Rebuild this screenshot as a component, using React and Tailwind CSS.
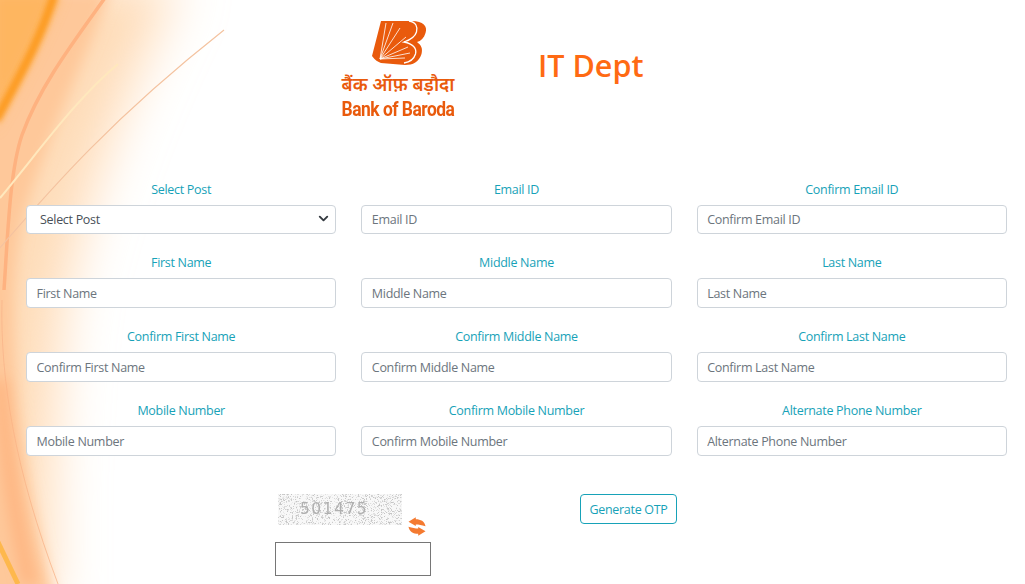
import React from "react";
import { ChevronDown } from "lucide-react";

const fields = [
  ["First Name", "Middle Name", "Last Name"],
  ["Confirm First Name", "Confirm Middle Name", "Confirm Last Name"],
  ["Mobile Number", "Confirm Mobile Number", "Alternate Phone Number"],
];

function Background() {
  return (
    <svg className="absolute inset-0 w-full h-full" viewBox="0 0 1025 584" preserveAspectRatio="none" aria-hidden="true">
      <defs>
        <filter id="b30" x="-50%" y="-20%" width="200%" height="140%"><feGaussianBlur stdDeviation="26" /></filter>
        <filter id="b8" x="-50%" y="-20%" width="200%" height="140%"><feGaussianBlur stdDeviation="7" /></filter>
        <filter id="b3" x="-50%" y="-20%" width="200%" height="140%"><feGaussianBlur stdDeviation="2.5" /></filter>
        <filter id="b1"><feGaussianBlur stdDeviation="0.5" /></filter>
      </defs>
      <path d="M-40 -20 L180 -20 C135 70 92 170 64 300 C52 400 50 500 52 604 L-40 604 Z" fill="#fedcb8" filter="url(#b30)" />
      <path d="M-20 -10 L110 -10 C85 60 50 130 25 210 C10 270 12 340 20 420 C28 490 40 540 55 600 L-20 600 Z" fill="#fec89a" filter="url(#b8)" />
      <path d="M-10 -10 L60 -10 C40 40 20 80 -10 130 Z" fill="#feb660" filter="url(#b8)" />
      <path d="M54 -5 C40 40 20 75 -4 120" stroke="#fd9c24" strokeWidth="9" fill="none" filter="url(#b3)" />
      <path d="M107 -5 C75 40 40 85 22 135 C10 170 8 230 4 290" stroke="#feb280" strokeWidth="3.5" fill="none" filter="url(#b1)" />
      <path d="M0 198 C40 150 75 100 118 64" stroke="#ffe8bd" strokeWidth="2" fill="none" filter="url(#b1)" />
      <path d="M-2 250 C50 190 110 120 224 30" stroke="#f4c3a0" strokeWidth="1.2" fill="none" filter="url(#b1)" />
      <path d="M2 300 C0 380 15 470 58 584" stroke="#f9b58a" strokeWidth="0.8" fill="none" />
      <path d="M0 380 C5 450 15 520 30 584" stroke="#feb27e" strokeWidth="12" fill="none" filter="url(#b8)" />
      <path d="M-3 540 L18 584" stroke="#feb84e" strokeWidth="5" fill="none" filter="url(#b1)" />
    </svg>
  );
}

function Logo() {
  const hub = [380, 59];
  const rays = [[386, 23], [393, 23], [400, 28], [406, 37], [408, 47], [410, 53], [405, 58]];
  return (
    <div className="flex flex-col items-center w-[114px] text-[#e95a0c]">
      <svg width="60" height="48" viewBox="368 19 60 48" aria-hidden="true">
        <path d="M381 21 L412 21 C423 21 428 26 425.5 33 C424 38 421 41 417 42 C421 45 423 48 421.5 54 C419 62 413 65 405 65 L381 63 C378 62 375 60 372 56 Z" fill="#e95a0c" />
        {rays.map((r, i) => (
          <line key={i} x1={hub[0]} y1={hub[1]} x2={r[0]} y2={r[1]} stroke="#fff" strokeWidth="0.8" />
        ))}
        <path d="M409 21 C416 22 418 27 416.5 32 C415 37 410 40 404 42 C413 44 417 48 415.5 54 C414 59 410 62 404 63" fill="none" stroke="#fff" strokeWidth="1.3" />
      </svg>
      <div className="mt-[9px] h-[22px] leading-[22px] text-[18.5px] font-semibold whitespace-nowrap tracking-normal" style={{ fontFamily: '"Noto Sans Devanagari","Noto Sans","DejaVu Sans",sans-serif' }}>
        बैंक ऑफ़ बड़ौदा
      </div>
      <div className="mt-[1px] h-[20px] leading-[20px] text-[21px] font-bold whitespace-nowrap tracking-[-0.6px] scale-x-[0.83] font-['Roboto',sans-serif]">
        Bank of Baroda
      </div>
    </div>
  );
}

function Field({ label, children }) {
  return (
    <div className="flex flex-col">
      <label className="text-center text-[#17a2b8] h-[18px] leading-[18px] mt-[1px] mb-[6px]">{label}</label>
      {children}
    </div>
  );
}

const inputBase = "w-full bg-white border border-[#ced4da] rounded-[4px] px-[9.5px] outline-none text-[#495057] placeholder:text-[#6c757d] placeholder:opacity-100";

function RefreshIcon() {
  const d = "M0.5 4.5 L8 0 L8 2 C13 2 17 4 18 9.3 C14 8 11 7.5 8 7.5 L8 9 Z";
  return (
    <svg width="18" height="19" viewBox="0 0 18.5 19" className="mt-[23px] ml-[6px] shrink-0" aria-hidden="true">
      <path d={d} fill="#f47a30" />
      <path d={d} fill="#f47a30" transform="rotate(180 9.25 9.5)" />
    </svg>
  );
}

function Captcha() {
  const specks = [];
  let s = 7;
  const next = () => {
    s = (s * 1103515 + 12345) % 2147483648;
    return Math.floor(s / 1024);
  };
  for (let i = 0; i < 1700; i++) {
    const x = next() % 124;
    const y = next() % 31;
    const v = 195 + (next() % 50);
    specks.push(<rect key={i} x={x} y={y} width="1" height="1" fill={`rgb(${v},${v},${v})`} />);
  }
  return (
    <svg width="124" height="31" viewBox="0 0 124 31" aria-hidden="true">
      <defs>
        <filter id="soft"><feGaussianBlur stdDeviation="0.45" /></filter>
      </defs>
      <rect width="124" height="31" fill="#f8f8f8" />
      {specks}
      <text x="22" y="20" fill="#b0b0b0" fontSize="15.5" letterSpacing="1.5" fontFamily="'DejaVu Sans',sans-serif" filter="url(#soft)">501475</text>
    </svg>
  );
}

export default function App() {
  return (
    <div className="relative w-[1025px] h-[584px] overflow-hidden bg-white text-[12.5px] tracking-[-0.3px] font-['Open_Sans',sans-serif]">
      <Background />
      <div className="relative flex flex-col h-full">
        <header className="flex h-[180px] pl-[341px]">
          <div className="pt-[19px]"><Logo /></div>
          <h1 className="ml-[83px] mt-[45px] text-[30.5px] tracking-normal leading-[40px] font-semibold text-[#ff6a13]">IT Dept</h1>
        </header>
        <div className="grid grid-cols-3 gap-x-[25px] gap-y-[19px] pl-[26px] pr-[18px]">
          <Field label="Select Post">
            <div className="relative">
              <select className="w-full h-[29px] appearance-none bg-white border border-[#ced4da] rounded-[4px] pl-[13px] pt-[1px] text-[#495057] outline-none">
                <option>Select Post</option>
              </select>
              <ChevronDown className="absolute right-[5px] top-[6px] text-[#343a40] pointer-events-none" size={15} strokeWidth={3} />
            </div>
          </Field>
          <Field label="Email ID"><input className={`${inputBase} h-[29px]`} placeholder="Email ID" /></Field>
          <Field label="Confirm Email ID"><input className={`${inputBase} h-[29px]`} placeholder="Confirm Email ID" /></Field>
          {fields.flat().map((f) => (
            <Field key={f} label={f}><input className={`${inputBase} h-[30px]`} placeholder={f} /></Field>
          ))}
        </div>
        <div className="flex mt-[38px] pl-[275px]">
          <div className="w-[156px]">
            <div className="flex items-start pl-[3px]">
              <Captcha />
              <RefreshIcon />
            </div>
            <input className="block mt-[6px] w-[156px] h-[34px] bg-white border border-[#767676] outline-none" />
          </div>
          <button className="ml-[149px] self-start h-[30px] w-[97px] pt-[2px] border border-[#17a2b8] rounded-[4px] bg-white text-[#17a2b8] text-center">Generate OTP</button>
        </div>
      </div>
    </div>
  );
}
